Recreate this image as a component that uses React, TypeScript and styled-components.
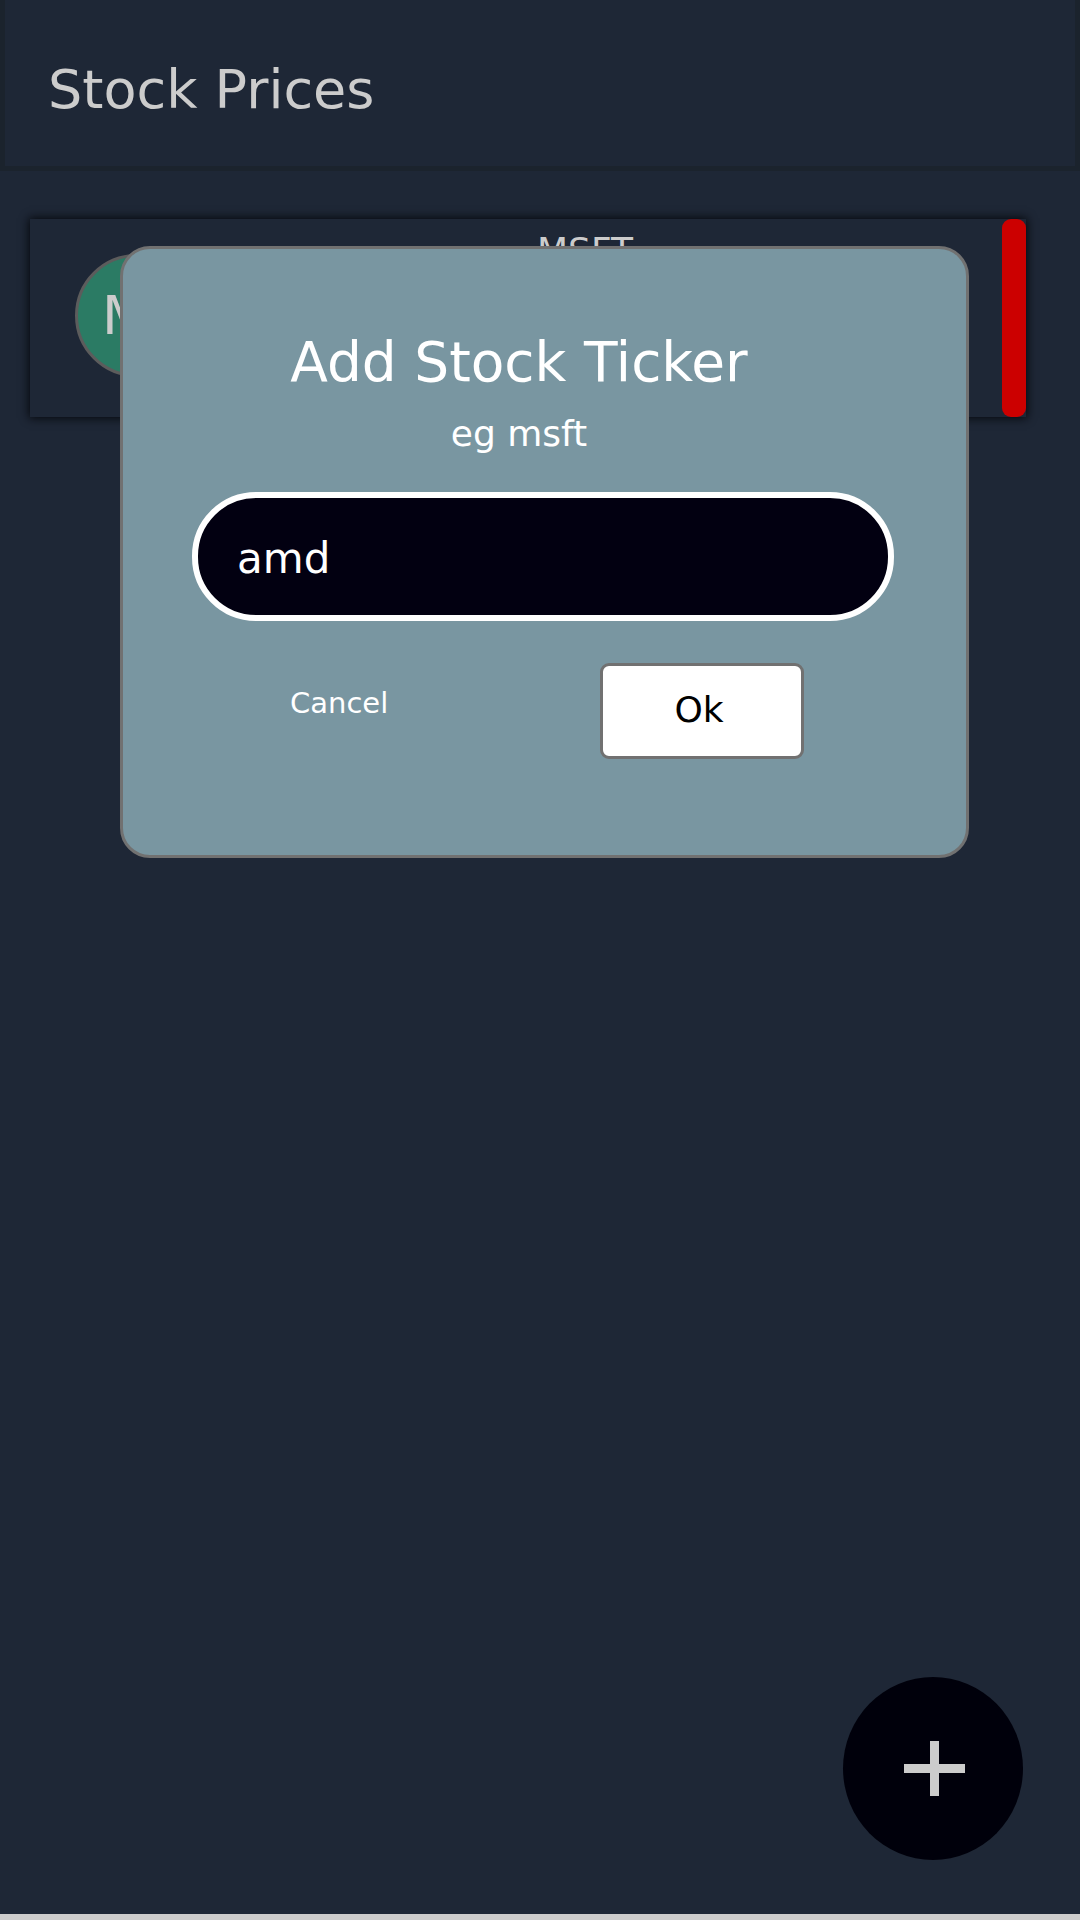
import React, { useState } from "react";
import styled, { createGlobalStyle } from "styled-components";

const GlobalStyle = createGlobalStyle`
  *, *::before, *::after { box-sizing: border-box; }
  body { margin: 0; background: #1e2736; }
  h1, h2, p { margin: 0; font-weight: 400; }
  button, input { font-family: inherit; }
`;

const Page = styled.div`
  position: relative;
  display: flex;
  flex-direction: column;
  min-height: 100vh;
  color: #cccccc;
  background: #1e2736;
  border-bottom: 6px solid #cccccc;
  font-family: "DejaVu Sans", Verdana, sans-serif;
`;

const Header = styled.header`
  padding: 59px 43px 45px;
  border: 5px solid #1b232d;
  border-top: 0;
`;

const PageTitle = styled.h1`
  font-size: 54px;
  line-height: 62px;
`;

const StockList = styled.main`
  flex: 1;
  padding: 48px 54px 48px 30px;
`;

const StockCard = styled.article`
  display: flex;
  align-items: center;
  height: 198px;
  padding-left: 45px;
  box-shadow: 0 0 9px 1px #05070b;
`;

const Avatar = styled.div<{ $color: string }>`
  display: flex;
  flex: none;
  align-items: center;
  width: 123px;
  height: 123px;
  margin-bottom: 6px;
  padding-left: 24px;
  border: 3px solid #5c5c5c;
  border-radius: 50%;
  background: ${(p) => p.$color};
  font-size: 54px;
`;

const StockName = styled.h2`
  flex: 1;
  align-self: flex-start;
  padding: 11px 30px 0 0;
  font-size: 36px;
  line-height: 42px;
  text-align: center;
`;

const Trend = styled.div<{ $color: string }>`
  align-self: stretch;
  width: 24px;
  border-radius: 9px;
  background: ${(p) => p.$color};
`;

const Dialog = styled.form`
  position: absolute;
  top: 246px;
  left: 120px;
  right: 111px;
  padding: 82px 72px 96px 69px;
  color: #ffffff;
  background: #7996a1;
  border: 3px solid #717171;
  border-radius: 30px;
`;

const DialogHead = styled.div`
  display: flex;
  flex-direction: column;
  align-items: center;
  padding-right: 48px;
  margin-bottom: 36px;
`;

const DialogTitle = styled.h2`
  font-size: 55px;
  line-height: 63px;
`;

const Hint = styled.label`
  margin-top: 18px;
  font-size: 36px;
  line-height: 44px;
`;

const TickerInput = styled.input`
  display: block;
  width: 100%;
  height: 129px;
  padding: 3px 39px 0;
  color: #ffffff;
  background: #020011;
  border: 6px solid #ffffff;
  border-radius: 64px;
  outline: none;
  font-size: 42px;
`;

const Actions = styled.div`
  display: flex;
  justify-content: space-between;
  align-items: flex-start;
  margin-top: 42px;
  padding: 0 90px 0 98px;
`;

const CancelButton = styled.button`
  height: 80px;
  padding: 0;
  color: inherit;
  background: none;
  border: 0;
  font-size: 29px;
`;

const OkButton = styled.button`
  width: 204px;
  height: 96px;
  padding: 0 6px 3px 0;
  color: #000000;
  background: #ffffff;
  border: 3px solid #717171;
  border-radius: 9px;
  font-size: 36px;
`;

const AddButton = styled.button`
  position: absolute;
  right: 57px;
  bottom: 54px;
  display: flex;
  align-items: center;
  justify-content: center;
  width: 180px;
  height: 183px;
  padding: 0 0 0 3px;
  color: #cccccc;
  background: #00000b;
  border: 0;
  border-radius: 50%;
`;

const stocks = [{ ticker: "MSFT", color: "#2b7b64", trend: "#cc0000" }];

export default function App() {
  const [ticker, setTicker] = useState("amd");

  return (
    <Page>
      <GlobalStyle />
      <Header>
        <PageTitle>Stock Prices</PageTitle>
      </Header>
      <StockList>
        {stocks.map((stock) => (
          <StockCard key={stock.ticker}>
            <Avatar $color={stock.color}>{stock.ticker[0]}</Avatar>
            <StockName>{stock.ticker}</StockName>
            <Trend $color={stock.trend} />
          </StockCard>
        ))}
      </StockList>
      <AddButton type="button" aria-label="Add stock">
        <svg width="61" height="55" viewBox="0 0 61 55" aria-hidden="true">
          <path d="M26 0h9v23h26v9H35v23h-9V32H0v-9h26z" fill="currentColor" />
        </svg>
      </AddButton>
      <Dialog role="dialog" aria-labelledby="dialog-title" onSubmit={(e) => e.preventDefault()}>
        <DialogHead>
          <DialogTitle id="dialog-title">Add Stock Ticker</DialogTitle>
          <Hint htmlFor="ticker">eg msft</Hint>
        </DialogHead>
        <TickerInput id="ticker" type="text" value={ticker} onChange={(e) => setTicker(e.target.value)} />
        <Actions>
          <CancelButton type="button">Cancel</CancelButton>
          <OkButton type="submit">Ok</OkButton>
        </Actions>
      </Dialog>
    </Page>
  );
}
